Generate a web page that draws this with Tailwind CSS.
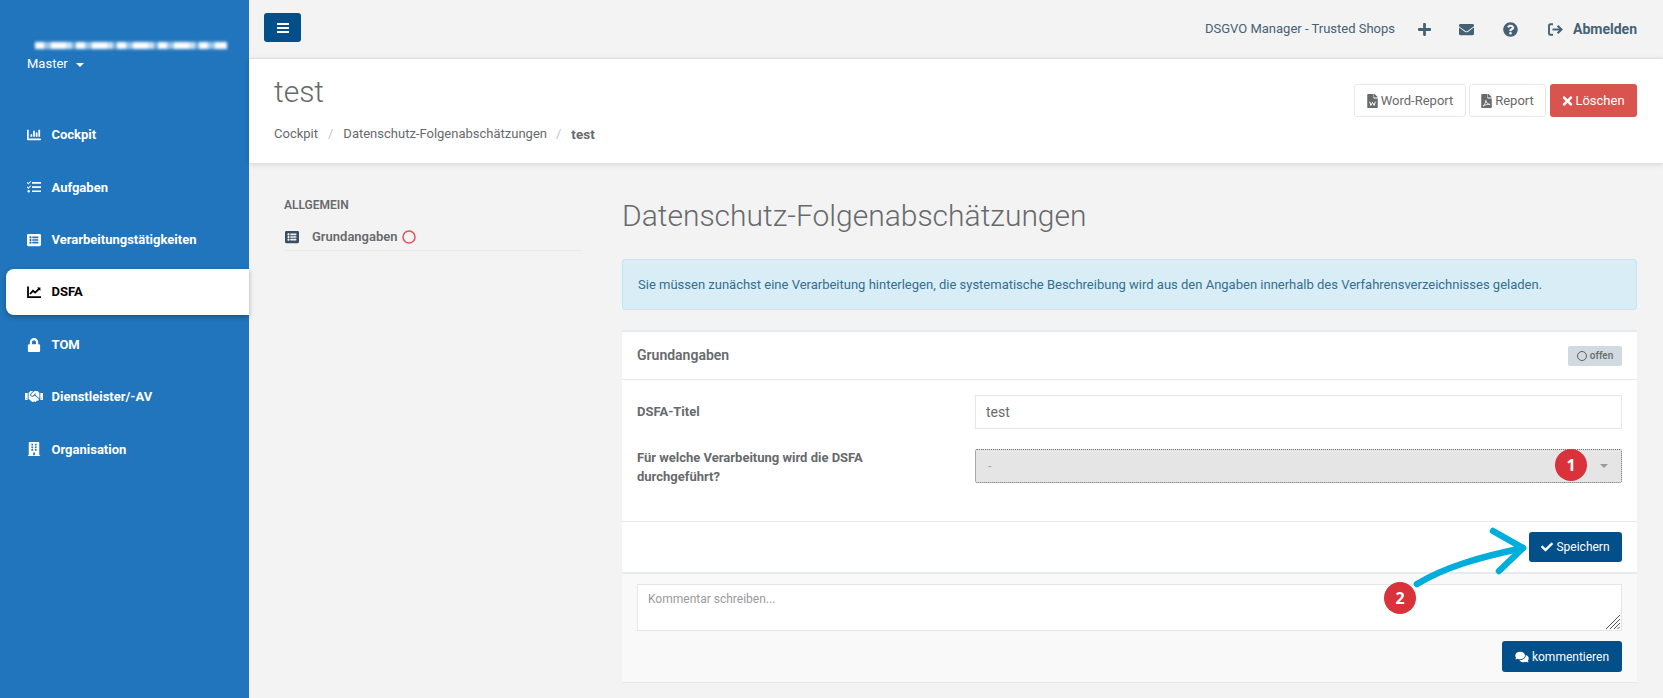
<!DOCTYPE html>
<html lang="de">
<head>
<meta charset="utf-8">
<title>DSFA</title>
<script src="https://cdn.jsdelivr.net/npm/@tailwindcss/browser@4"></script>
</head>
<body class="m-0 bg-[#f3f3f4] font-['Roboto',sans-serif] text-[13px] text-[#676a6c]">
<div class="relative flex h-[698px] w-full overflow-hidden">
  <!-- Sidebar -->
  <aside class="w-[249px] shrink-0 bg-[#2175bc] pt-[42px] text-white">
    <div aria-hidden="true" class="ml-[35px] h-[7px] w-[192px] blur-[1.5px] bg-[repeating-linear-gradient(90deg,#fff_0_9px,#9cc6e8_9px_16px,#fff_16px_31px,#cfe4f5_31px_37px,#6fabdc_37px_41px)]"></div>
    <div class="ml-[27px] mt-[6px] flex h-[18px] items-center gap-[8px] text-[13px] text-white">Master <span class="mt-[2px] h-0 w-0 border-x-[4px] border-t-[4px] border-x-transparent border-t-white"></span></div>
    <nav class="ml-[6px] mt-[39px] flex flex-col gap-[6.4px] text-[13px] font-bold">
      <a class="flex h-[46px] items-center pl-[21px]"><span class="flex w-[24.5px]"><svg viewBox="0 0 512 512" class="h-[14px] w-[14px]" fill="currentColor"><path d="M332.8 320h38.4c6.4 0 12.8-6.4 12.8-12.8V172.8c0-6.4-6.4-12.8-12.8-12.8h-38.4c-6.4 0-12.8 6.4-12.8 12.8v134.4c0 6.4 6.4 12.8 12.8 12.8zm96 0h38.4c6.4 0 12.8-6.4 12.8-12.8V76.8c0-6.4-6.4-12.8-12.8-12.8h-38.4c-6.4 0-12.8 6.4-12.8 12.8v230.4c0 6.4 6.4 12.8 12.8 12.8zm-288 0h38.4c6.4 0 12.8-6.4 12.8-12.8v-70.4c0-6.4-6.4-12.8-12.8-12.8h-38.4c-6.4 0-12.8 6.4-12.8 12.8v70.4c0 6.4 6.4 12.8 12.8 12.8zm96 0h38.4c6.4 0 12.8-6.4 12.8-12.8V108.8c0-6.4-6.4-12.8-12.8-12.8h-38.4c-6.4 0-12.8 6.4-12.8 12.8v198.4c0 6.4 6.4 12.8 12.8 12.8zM496 384H64V80c0-8.84-7.16-16-16-16H16C7.16 64 0 71.16 0 80v336c0 17.67 14.33 32 32 32h464c8.84 0 16-7.16 16-16v-32c0-8.84-7.16-16-16-16z"/></svg></span>Cockpit</a>
      <a class="flex h-[46px] items-center pl-[21px]"><span class="flex w-[24.5px]"><svg viewBox="0 0 14 14" class="h-[14px] w-[14px]" fill="currentColor"><path d="M5 2h9v1.7H5zM5 6.2h9v1.7H5zM5 10.4h9v1.7H5z"/><circle cx="1.7" cy="11.2" r="1.2"/><path d="M.4 6.6l1 1 2-2.2.7.6-2.7 3L-.3 7.3zM.4 2.1l1 1 2-2.2.7.6-2.7 3L-.3 2.8z"/></svg></span>Aufgaben</a>
      <a class="flex h-[46px] items-center pl-[21px]"><span class="flex w-[24.5px]"><svg viewBox="0 0 512 512" class="h-[14px] w-[14px]" fill="currentColor"><path d="M464 480H48c-26.51 0-48-21.49-48-48V80c0-26.51 21.49-48 48-48h416c26.51 0 48 21.49 48 48v352c0 26.51-21.49 48-48 48zM128 120c-22.091 0-40 17.909-40 40s17.909 40 40 40 40-17.909 40-40-17.909-40-40-40zm0 96c-22.091 0-40 17.909-40 40s17.909 40 40 40 40-17.909 40-40-17.909-40-40-40zm0 96c-22.091 0-40 17.909-40 40s17.909 40 40 40 40-17.909 40-40-17.909-40-40-40zm288-136v-32c0-6.627-5.373-12-12-12H204c-6.627 0-12 5.373-12 12v32c0 6.627 5.373 12 12 12h200c6.627 0 12-5.373 12-12zm0 96v-32c0-6.627-5.373-12-12-12H204c-6.627 0-12 5.373-12 12v32c0 6.627 5.373 12 12 12h200c6.627 0 12-5.373 12-12zm0 96v-32c0-6.627-5.373-12-12-12H204c-6.627 0-12 5.373-12 12v32c0 6.627 5.373 12 12 12h200c6.627 0 12-5.373 12-12z"/></svg></span>Verarbeitungstätigkeiten</a>
      <a class="flex h-[46px] items-center rounded-l-[8px] bg-white pl-[21px] text-black shadow-[0_2px_5px_rgba(0,0,0,0.3)]"><span class="flex w-[24.5px]"><svg viewBox="0 0 14 14" class="h-[14px] w-[14px]" fill="none" stroke="currentColor"><path d="M1 1.500V12.200H14" stroke-width="1.8"/><path d="M3 9l3-3.200 2.200 1.800L12.500 3.400" stroke-width="1.8"/><path d="M10 2.500h3.400v3.400z" fill="currentColor" stroke="none"/></svg></span>DSFA</a>
      <a class="flex h-[46px] items-center pl-[21px]"><span class="flex w-[24.5px]"><svg viewBox="0 0 448 512" class="h-[14px] w-[14px]" fill="currentColor"><path d="M400 224h-24v-72C376 68.2 307.8 0 224 0S72 68.2 72 152v72H48c-26.5 0-48 21.5-48 48v192c0 26.5 21.5 48 48 48h352c26.5 0 48-21.5 48-48V272c0-26.5-21.5-48-48-48zm-104 0H152v-72c0-39.7 32.3-72 72-72s72 32.3 72 72v72z"/></svg></span>TOM</a>
      <a class="flex h-[46px] items-center pl-[19px]"><span class="flex w-[26.5px]"><svg viewBox="0 0 640 512" class="h-[15px] w-[18px]" fill="currentColor"><path d="M434.7 64h-85.9c-8 0-15.7 3-21.6 8.4l-98.3 90c-.1.1-.2.3-.3.4-16.6 15.6-16.3 40.5-2.1 56 12.7 13.9 39.4 17.6 56.1 2.7.1-.1.3-.1.4-.2l79.9-73.2c6.5-5.9 16.7-5.5 22.6 1 6 6.5 5.5 16.6-1 22.6l-26.1 23.9L504 313.8c2.9 2.4 5.5 5 7.9 7.7V128l-54.6-54.6c-5.9-6-14.1-9.4-22.6-9.4zM544 128.2v223.9c0 17.7 14.3 32 32 32h64V128.2h-96zm48 223.9c-8.8 0-16-7.2-16-16s7.2-16 16-16 16 7.2 16 16-7.2 16-16 16zM0 384h64c17.7 0 32-14.3 32-32V128.2H0V384zm48-63.9c8.8 0 16 7.2 16 16s-7.2 16-16 16-16-7.2-16-16c0-8.9 7.2-16 16-16zm435.9 18.6L334.6 217.5l-30 27.5c-29.7 27.1-75.2 24.5-101.7-4.4-26.9-29.4-24.8-74.9 4.4-101.7L289.1 64h-83.8c-8.5 0-16.6 3.4-22.6 9.4L128 128v223.9h18.3l90.5 81.9c27.4 22.3 67.7 18.1 90-9.3l.2-.2 17.9 15.5c15.9 13 39.4 10.5 52.3-5.4l31.4-38.6 5.4 4.4c13.7 11.1 33.9 9.1 45-4.7l9.5-11.7c11.2-13.8 9.1-33.9-4.6-45.1z"/></svg></span>Dienstleister/-AV</a>
      <a class="flex h-[46px] items-center pl-[21px]"><span class="flex w-[24.5px]"><svg viewBox="0 0 448 512" class="h-[14px] w-[14px]" fill="currentColor"><path d="M436 480h-20V24c0-13.255-10.745-24-24-24H56C42.745 0 32 10.745 32 24v456H12c-6.627 0-12 5.373-12 12v20h448v-20c0-6.627-5.373-12-12-12zM128 76c0-6.627 5.373-12 12-12h40c6.627 0 12 5.373 12 12v40c0 6.627-5.373 12-12 12h-40c-6.627 0-12-5.373-12-12V76zm0 96c0-6.627 5.373-12 12-12h40c6.627 0 12 5.373 12 12v40c0 6.627-5.373 12-12 12h-40c-6.627 0-12-5.373-12-12v-40zm52 148h-40c-6.627 0-12-5.373-12-12v-40c0-6.627 5.373-12 12-12h40c6.627 0 12 5.373 12 12v40c0 6.627-5.373 12-12 12zm76 160h-64v-84c0-6.627 5.373-12 12-12h40c6.627 0 12 5.373 12 12v84zm64-172c0 6.627-5.373 12-12 12h-40c-6.627 0-12-5.373-12-12v-40c0-6.627 5.373-12 12-12h40c6.627 0 12 5.373 12 12v40zm0-96c0 6.627-5.373 12-12 12h-40c-6.627 0-12-5.373-12-12v-40c0-6.627 5.373-12 12-12h40c6.627 0 12 5.373 12 12v40zm0-96c0 6.627-5.373 12-12 12h-40c-6.627 0-12-5.373-12-12V76c0-6.627 5.373-12 12-12h40c6.627 0 12 5.373 12 12v40z"/></svg></span>Organisation</a>
    </nav>
  </aside>

  <!-- Main -->
  <main class="flex min-w-0 flex-1 flex-col">
    <div class="flex h-[59px] shrink-0 items-center justify-between border-b border-[#e7eaec] pl-[15px] pr-[26px] text-[#456274]">
      <button class="-mt-[3px] flex h-[29px] w-[37px] items-center justify-center rounded-[3px] bg-[#024f8a]"><svg viewBox="0 0 12 10" class="h-[10px] w-[12px]" fill="#fff"><path d="M0 0h12v2H0zM0 4h12v2H0zM0 8h12v2H0z"/></svg></button>
      <div class="flex items-center">
        <span class="text-[13px]">DSGVO Manager - Trusted Shops</span>
        <svg viewBox="0 0 448 512" class="ml-[23px] h-[15px] w-[13px]" fill="currentColor"><path d="M416 208H272V64c0-17.67-14.33-32-32-32h-32c-17.67 0-32 14.33-32 32v144H32c-17.67 0-32 14.33-32 32v32c0 17.67 14.33 32 32 32h144v144c0 17.67 14.33 32 32 32h32c17.67 0 32-14.33 32-32V304h144c17.67 0 32-14.33 32-32v-32c0-17.67-14.33-32-32-32z"/></svg>
        <svg viewBox="0 0 512 512" class="ml-[28px] h-[15px] w-[15px]" fill="currentColor"><path d="M502.3 190.8c3.9-3.1 9.7-.2 9.7 4.7V400c0 26.5-21.5 48-48 48H48c-26.5 0-48-21.5-48-48V195.6c0-5 5.7-7.8 9.7-4.7 22.4 17.4 52.1 39.5 154.1 113.6 21.1 15.4 56.7 47.8 92.2 47.6 35.7.3 72-32.8 92.3-47.6 102-74.1 131.6-96.3 154-113.7zM256 320c23.2.4 56.6-29.2 73.4-41.4 132.7-96.3 142.8-104.7 173.4-128.7 5.8-4.5 9.2-11.5 9.2-18.9v-19c0-26.5-21.5-48-48-48H48C21.5 64 0 85.5 0 112v19c0 7.4 3.4 14.3 9.2 18.9 30.6 23.9 40.7 32.4 173.4 128.7 16.8 12.2 50.2 41.8 73.4 41.4z"/></svg>
        <svg viewBox="0 0 512 512" class="ml-[29px] h-[15px] w-[15px]" fill="currentColor"><path d="M504 256c0 136.997-111.043 248-248 248S8 392.997 8 256C8 119.083 119.043 8 256 8s248 111.083 248 248zM262.655 90c-54.497 0-89.255 22.957-116.549 63.758-3.536 5.286-2.353 12.415 2.715 16.258l34.699 26.31c5.205 3.947 12.621 3.008 16.665-2.122 17.864-22.658 30.113-35.797 57.303-35.797 20.429 0 45.698 13.148 45.698 32.958 0 14.976-12.363 22.667-32.534 33.976C247.128 238.528 216 254.941 216 296v4c0 6.627 5.373 12 12 12h56c6.627 0 12-5.373 12-12v-1.333c0-28.462 83.186-29.647 83.186-106.667 0-58.002-60.165-102-116.531-102zM256 338c-25.365 0-46 20.635-46 46 0 25.364 20.635 46 46 46s46-20.636 46-46c0-25.365-20.635-46-46-46z"/></svg>
        <svg viewBox="0 0 15 13" class="ml-[30px] h-[13px] w-[15px]" fill="none" stroke="currentColor" stroke-width="1.9"><path d="M5 1.200H2.400Q1 1.200 1 2.600v7.800q0 1.400 1.400 1.400H5"/><path d="M4.500 6.500h8.500"/><path d="M9.600 2.800l3.800 3.700-3.800 3.700" stroke-width="2.100"/></svg>
        <span class="ml-[10px] text-[14px] font-bold">Abmelden</span>
      </div>
    </div>

    <header class="relative z-10 flex h-[104px] shrink-0 justify-between bg-white pl-[25px] pr-[26px] shadow-[0_1px_6px_rgba(0,0,0,0.14)]">
      <div class="pt-[15px]">
        <h1 class="text-[30px] font-light leading-[36px] text-[#676a6c]">test</h1>
        <div class="mt-[14px] flex h-[20px] items-center text-[13px] leading-[20px]">
          <span>Cockpit</span><span class="mx-[10px] text-[#c4c6c8]">/</span><span>Datenschutz-Folgenabschätzungen</span><span class="ml-[9px] mr-[10px] text-[#c4c6c8]">/</span><b class="text-[13.5px] font-bold">test</b>
        </div>
      </div>
      <div class="flex gap-[3px] pt-[25px]">
        <button class="flex h-[33px] w-[112px] items-center justify-center gap-[3px] rounded-[3px] border border-[#e7eaec] bg-white text-[13px]"><svg viewBox="0 0 384 512" class="h-[14px] w-[11px]"><path fill="#676a6c" d="M369.900 97.900L286 14C277 5 264.800-.1 252.100-.1H240V104c0 13.300 10.700 24 24 24h120v-.1c0-11.700-5.100-21-14.100-30zM224 136V0H24C10.700 0 0 10.700 0 24v464c0 13.300 10.700 24 24 24h336c13.300 0 24-10.700 24-24V160H248c-13.200 0-24-10.800-24-24z"/><path d="M90 280l40 140 62-110 62 110 40-140" fill="none" stroke="#fff" stroke-width="36"/></svg>Word-Report</button>
        <button class="flex h-[33px] w-[77px] items-center justify-center gap-[3px] rounded-[3px] border border-[#e7eaec] bg-white text-[13px]"><svg viewBox="0 0 384 512" class="h-[14px] w-[11px]"><path fill="#676a6c" d="M369.900 97.900L286 14C277 5 264.800-.1 252.100-.1H240V104c0 13.300 10.700 24 24 24h120v-.1c0-11.700-5.100-21-14.100-30zM224 136V0H24C10.700 0 0 10.700 0 24v464c0 13.300 10.700 24 24 24h336c13.300 0 24-10.700 24-24V160H248c-13.200 0-24-10.800-24-24z"/><path d="M70 440c50-40 90-130 100-210 5 90 70 140 150 150-90-10-170 10-250 60z" fill="none" stroke="#fff" stroke-width="30"/></svg>Report</button>
        <button class="ml-[1px] flex h-[33px] w-[87px] items-center justify-center gap-[2px] rounded-[3px] bg-[#d9534f] text-[13px] text-white"><svg viewBox="0 0 352 512" class="h-[14px] w-[11px]" fill="#fff"><path d="M242.72 256l100.07-100.07c12.28-12.28 12.28-32.19 0-44.48l-22.24-22.24c-12.28-12.28-32.19-12.28-44.48 0L176 189.28 75.93 89.21c-12.28-12.28-32.19-12.28-44.48 0L9.21 111.45c-12.28 12.28-12.28 32.19 0 44.48L109.28 256 9.21 356.07c-12.28 12.28-12.28 32.19 0 44.48l22.24 22.24c12.28 12.28 32.2 12.28 44.48 0L176 322.72l100.07 100.07c12.28 12.28 32.2 12.28 44.48 0l22.24-22.24c12.28-12.28 12.28-32.19 0-44.48L242.72 256z"/></svg>Löschen</button>
      </div>
    </header>

    <div class="flex min-h-0 flex-1">
      <!-- Sub nav -->
      <div class="ml-[35px] w-[298px] shrink-0 pt-[34px]">
        <div class="text-[12px] font-semibold leading-[16px] text-[#676a6c]">ALLGEMEIN</div>
        <div class="mt-[10px] flex h-[28px] items-center border-b border-[#e7eaec] pl-[1px] font-semibold">
          <svg viewBox="0 0 512 512" class="h-[14px] w-[14px] text-[#3a4f63]" fill="currentColor"><path d="M464 480H48c-26.51 0-48-21.49-48-48V80c0-26.51 21.49-48 48-48h416c26.51 0 48 21.49 48 48v352c0 26.51-21.49 48-48 48zM128 120c-22.091 0-40 17.909-40 40s17.909 40 40 40 40-17.909 40-40-17.909-40-40-40zm0 96c-22.091 0-40 17.909-40 40s17.909 40 40 40 40-17.909 40-40-17.909-40-40-40zm0 96c-22.091 0-40 17.909-40 40s17.909 40 40 40 40-17.909 40-40-17.909-40-40-40zm288-136v-32c0-6.627-5.373-12-12-12H204c-6.627 0-12 5.373-12 12v32c0 6.627 5.373 12 12 12h200c6.627 0 12-5.373 12-12zm0 96v-32c0-6.627-5.373-12-12-12H204c-6.627 0-12 5.373-12 12v32c0 6.627 5.373 12 12 12h200c6.627 0 12-5.373 12-12zm0 96v-32c0-6.627-5.373-12-12-12H204c-6.627 0-12 5.373-12 12v32c0 6.627 5.373 12 12 12h200c6.627 0 12-5.373 12-12z"/></svg>
          <span class="ml-[13px]">Grundangaben</span>
          <svg viewBox="0 0 14 14" class="ml-[4px] h-[14px] w-[14px]" fill="none" stroke="#e4505a" stroke-width="1.5"><circle cx="7" cy="7" r="6"/></svg>
        </div>
      </div>

      <!-- Content -->
      <div class="ml-[40px] flex-1 pr-[26px] pt-[33px]">
        <h2 class="text-[30px] font-light leading-[40px] text-[#676a6c]">Datenschutz-Folgenabschätzungen</h2>
        <div class="mt-[23px] flex h-[51px] items-center rounded-[3px] border border-[#bce8f1] bg-[#d9edf7] pl-[15px] text-[13px] text-[#31708f]">Sie müssen zunächst eine Verarbeitung hinterlegen, die systematische Beschreibung wird aus den Angaben innerhalb des Verfahrensverzeichnisses geladen.</div>

        <section class="mt-[20px] border-t-2 border-[#e7eaec] bg-white">
          <div class="flex h-[48px] items-center justify-between border-b border-[#e7eaec] px-[15px]">
            <h3 class="text-[14px] font-semibold">Grundangaben</h3>
            <span class="flex h-[20px] w-[54px] items-center justify-center gap-[3px] rounded-[2px] bg-[#d1dade] text-[10px] font-medium"><span class="h-[10px] w-[10px] rounded-full border border-[#5e5e5e]"></span>offen</span>
          </div>
          <div class="px-[15px] pb-[38px] pt-[15px]">
            <div class="flex items-center">
              <label class="w-[338px] shrink-0 text-[13px] font-bold">DSFA-Titel</label>
              <input value="test" class="h-[34px] flex-1 border border-[#e5e6e7] bg-white pl-[10px] text-[14px] text-[#676a6c] outline-none">
            </div>
            <div class="mt-[20px] flex h-[34px]">
              <label class="w-[338px] shrink-0 -mt-[1.5px] text-[13px] font-bold leading-[19px]">Für welche Verarbeitung wird die DSFA<br>durchgeführt?</label>
              <div class="flex h-[34px] flex-1 items-center justify-between rounded-[2px] border border-dotted border-[#6b6b6b] bg-[#e5e5e5] pl-[12px] pr-[13px] text-[#a6a6a6]">-<span class="h-0 w-0 border-x-[4px] border-t-[4px] border-x-transparent border-t-[#9a9a9a]"></span></div>
            </div>
          </div>
          <div class="flex h-[53px] items-center justify-end border-b-2 border-t border-[#e7eaec] pr-[15px]">
            <button class="flex h-[30px] w-[93px] items-center justify-center gap-[3px] rounded-[3px] bg-[#024f8a] text-[12px] text-white"><svg viewBox="0 0 512 512" class="h-[12px] w-[12px]" fill="#fff"><path d="M173.898 439.404l-166.4-166.4c-9.997-9.997-9.997-26.206 0-36.204l36.203-36.204c9.997-9.998 26.207-9.998 36.204 0L192 312.69 432.095 72.596c9.997-9.997 26.207-9.997 36.204 0l36.203 36.204c9.997 9.997 9.997 26.206 0 36.204l-294.4 294.401c-9.998 9.997-26.207 9.997-36.204-.001z"/></svg>Speichern</button>
          </div>
          <div class="h-[109px] border-b border-[#e7eaec] bg-[#f9f9f9] px-[15px] pt-[10px]">
            <div class="relative">
              <textarea readonly placeholder="Kommentar schreiben..." class="block h-[47px] w-full resize-none border border-[#e5e6e7] bg-white px-[10px] pt-[5px] text-[12px] leading-[18px] outline-none placeholder:text-[#9a9a9a]"></textarea>
              <svg aria-hidden="true" viewBox="0 0 14 14" class="absolute bottom-[2px] right-[2px] h-[14px] w-[14px]" stroke="#555" stroke-width="1"><path d="M14 0L0 14M14 4L4 14M14 8L8 14M14 11.500L11.500 14"/></svg>
            </div>
            <div class="mt-[10px] flex justify-end">
              <button class="flex h-[31px] w-[120px] items-center justify-center gap-[3px] rounded-[3px] bg-[#024f8a] text-[12px] text-white"><svg viewBox="0 0 576 512" class="h-[12px] w-[14px]" fill="#fff"><path d="M416 192c0-88.4-93.1-160-208-160S0 103.6 0 192c0 34.3 14.1 65.9 38 92-13.4 30.2-35.5 54.2-35.8 54.5-2.2 2.3-2.8 5.7-1.5 8.7S4.8 352 8 352c36.6 0 66.9-12.3 88.7-25 32.2 15.7 70.3 25 111.3 25 114.9 0 208-71.6 208-160zm122 220c23.9-26 38-57.7 38-92 0-66.9-53.5-124.2-129.3-148.1.9 6.6 1.3 13.3 1.3 20.1 0 105.9-107.7 192-240 192-10.8 0-21.3-.8-31.7-1.9C207.8 439.6 281.8 480 368 480c41 0 79.1-9.2 111.3-25 21.8 12.7 52.1 25 88.7 25 3.2 0 6.1-1.9 7.3-4.8 1.3-2.9.7-6.3-1.5-8.7-.3-.3-22.4-24.2-35.8-54.5z"/></svg>kommentieren</button>
            </div>
          </div>
        </section>
      </div>
    </div>
  </main>

  <!-- Annotations over the page -->
  <span class="absolute left-[1555px] top-[449px] flex h-[32px] w-[32px] items-center justify-center rounded-full bg-[#d9323a] font-['Open_Sans',sans-serif] text-[16px] font-bold text-white">1</span>
  <span class="absolute left-[1384px] top-[582px] flex h-[32px] w-[32px] items-center justify-center rounded-full bg-[#d9323a] font-['Open_Sans',sans-serif] text-[16px] font-bold text-white">2</span>
  <svg class="absolute left-[1400px] top-[520px] h-[80px] w-[140px]" viewBox="1400 520 140 80" fill="none" stroke="#00aedb" stroke-width="6.5" stroke-linecap="round" stroke-linejoin="round"><path d="M1417 584C1445 567 1480 557 1523 548"/><path d="M1493 531L1523 548L1499 571"/></svg>
</div>
</body>
</html>
